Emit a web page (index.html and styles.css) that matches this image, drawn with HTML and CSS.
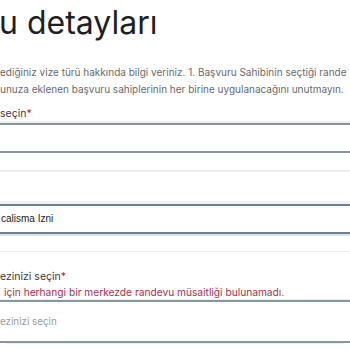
FILE: index.html
```html
<!DOCTYPE html>
<html lang="tr">
<head>
  <meta charset="UTF-8">
  <meta name="viewport" content="width=device-width, initial-scale=1.0">
  <title>Randevu detayları</title>
  <link rel="stylesheet" href="styles.css">
</head>
<body>
  <main class="page">
    <h1 class="title">u detayları</h1>
    <p class="intro">
      <span class="intro-line">ediğiniz vize türü hakkında bilgi veriniz. 1. Başvuru Sahibinin seçtiği rande</span>
      <span class="intro-line">unuza eklenen başvuru sahiplerinin her birine uygulanacağını unutmayın.</span>
    </p>

    <div class="field">
      <label class="field-label">seçin<span class="req">*</span></label>
      <div class="select"></div>
    </div>

    <div class="option-list">
      <div class="option option--gap"></div>
      <div class="option option--active">calisma Izni</div>
      <div class="option option--blank"></div>
    </div>

    <div class="field field--error">
      <label class="field-label">ezinizi seçin<span class="req">*</span></label>
      <div class="field-error">için herhangi bir merkezde randevu müsaitliği bulunamadı.</div>
      <div class="select select--tall">
        <span class="placeholder">ezinizi seçin</span>
      </div>
    </div>
  </main>
</body>
</html>
```

FILE: styles.css
```css
body {
  margin: 0;
  font-family: Inter, "Noto Sans", sans-serif;
  background-color: #fff;
  color: #222;
  overflow: hidden;
  height: 350px;
}
.page {
  padding-top: 4px;
  white-space: nowrap;
}
.title {
  margin: 0 0 0 -1px;
  font-size: 32px;
  font-weight: 400;
  line-height: 38px;
  color: #1f1f1f;
}
.intro {
  margin: 22px 0 0;
  font-size: 10px;
  line-height: 17px;
  color: #6a6a6a;
}
.intro-line {
  display: block;
}
.field-label {
  display: block;
  font-size: 10.5px;
  line-height: 16px;
  color: #3a3a3a;
}
.req {
  color: #a3263f;
}
.field {
  margin-top: 8px;
}
.field .field-label {
  margin-bottom: 1px;
}
.select {
  height: 26px;
  border-top: 2px solid #8896a2;
  border-bottom: 2px solid #8896a2;
  box-shadow: 0 -2px 0 #eef1f3;
}
.option--gap {
  height: 51px;
  background: linear-gradient(#fff 17px, #ededed 17px, #ededed 19px, #fff 19px, #fff 48px, #eef2f5 48px);
}
.option--active {
  height: 26px;
  line-height: 26px;
  border-top: 2px solid #6f7f8c;
  border-bottom: 2px solid #6f7f8c;
  box-shadow: 0 2px 0 #dde5ec;
  font-family: "Liberation Sans", Arial, sans-serif;
  font-size: 10px;
  color: #222;
  padding-left: 1px;
}
.option--blank {
  height: 17px;
  border-bottom: 1px solid #efefef;
}
.field--error {
  margin-top: 17px;
}
.field--error .field-label {
  margin-bottom: 0;
}
.field-error {
  font-size: 10.2px;
  line-height: 15px;
  color: #a8304a;
  padding-left: 4px;
  margin-bottom: 0;
}
.select--tall {
  height: 39px;
  display: flex;
  align-items: center;
  box-shadow: 0 -1px 0 #eef1f3, 0 7px 0 -6px #eeeeee;
}
.placeholder {
  font-size: 9.8px;
  color: #9a9a9a;
}
```
